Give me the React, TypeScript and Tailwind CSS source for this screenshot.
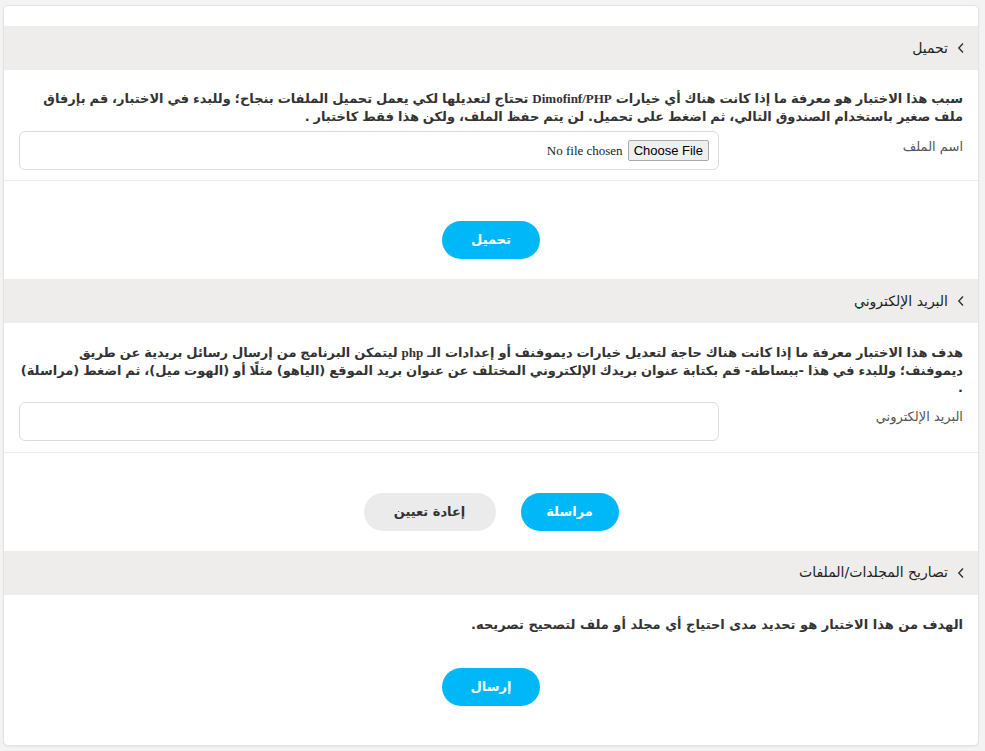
import React from "react";

const ar = { fontFamily: '"DejaVu Sans", "Liberation Sans", sans-serif' };
const serif = { fontFamily: '"Liberation Serif", serif' };

function Chevron() {
  return (
    <svg width="8" height="12" viewBox="0 0 8 12" className="shrink-0">
      <path d="M6 1.5 L1.8 6 L6 10.5" fill="none" stroke="#333" strokeWidth="1.4" />
    </svg>
  );
}

function Header({ title }: { title: string }) {
  return (
    <div className="h-[44px] bg-[#eeedeb] flex items-center pr-[13px] gap-[9px] text-[14px] text-[#222]">
      <Chevron />
      <span>{title}</span>
    </div>
  );
}

function PillButton({ label, gray }: { label: string; gray?: boolean }) {
  return (
    <button
      className={
        "h-[38px] rounded-full text-[13px] font-bold " +
        (gray ? "bg-[#ebebeb] text-[#333] w-[132px]" : "bg-[#00b8f8] text-white w-[98px]")
      }
      style={ar}
    >
      {label}
    </button>
  );
}

export default function App() {
  return (
    <div className="min-h-screen bg-[#f3f3f3] pt-[5px] pb-[5px]" style={ar}>
      <div
        dir="rtl"
        className="ml-[3px] w-[976px] bg-white border border-[#e3e3e3] rounded-[5px] shadow-[0_1px_2px_rgba(0,0,0,0.06)] pt-[20px] pb-[39px]"
      >
        {/* Section 1 */}
        <Header title="تحميل" />
        <div className="px-[15px] pt-[20px] pb-[10px]">
          <p className="text-[13px] font-bold leading-[17.5px] text-[#333] [word-spacing:-0.6px]">
            سبب هذا الاختبار هو معرفة ما إذا كانت هناك أي خيارات{" "}
            <span style={serif}>Dimofinf/PHP</span> تحتاج لتعديلها لكي يعمل تحميل الملفات بنجاح؛ وللبدء في
            الاختبار، قم بإرفاق ملف صغير باستخدام الصندوق التالي، ثم اضغط على تحميل. لن يتم حفظ الملف، ولكن هذا
            فقط كاختبار .
          </p>
          <div className="mt-[6px] flex">
            <label className="w-[244px] shrink-0 pt-[6px] text-[13px] text-[#555]">اسم الملف</label>
            <div className="flex-1 h-[39px] border border-[#dcdcdc] rounded-[6px] flex items-center pr-[9px] gap-[5px]">
              <span
                className="h-[21px] px-[5px] flex items-center border border-[#a9a9a9] rounded-[2px] bg-[#efefef] text-[13px] text-black"
                style={{ fontFamily: '"Liberation Sans", Arial, sans-serif' }}
              >
                Choose File
              </span>
              <span className="text-[13px] text-[#222]" style={serif}>
                No file chosen
              </span>
            </div>
          </div>
        </div>
        <div className="border-t border-[#ececec]" />
        <div className="pt-[40px] pb-[20px] flex justify-center">
          <PillButton label="تحميل" />
        </div>

        {/* Section 2 */}
        <Header title="البريد الإلكتروني" />
        <div className="px-[15px] pt-[21px] pb-[11px]">
          <p className="text-[13px] font-bold leading-[17.5px] text-[#333] [word-spacing:-0.6px]">
            هدف هذا الاختبار معرفة ما إذا كانت هناك حاجة لتعديل خيارات ديموفنف أو إعدادات الـ{" "}
            <span style={serif}>php</span> ليتمكن البرنامج من إرسال رسائل بريدية عن طريق ديموفنف؛ وللبدء في هذا
            -ببساطة- قم بكتابة عنوان بريدك الإلكتروني المختلف عن عنوان بريد الموقع (الياهو) مثلًا أو (الهوت ميل)،
            ثم اضغط (مراسلة) .
          </p>
          <div className="mt-[5px] flex">
            <label className="w-[244px] shrink-0 pt-[5px] text-[13px] text-[#555]">البريد الإلكتروني</label>
            <div className="flex-1 h-[39px] border border-[#dcdcdc] rounded-[6px]" />
          </div>
        </div>
        <div className="border-t border-[#ececec]" />
        <div className="pt-[40px] pb-[20px] flex justify-center gap-[25px]">
          <PillButton label="مراسلة" />
          <PillButton label="إعادة تعيين" gray />
        </div>

        {/* Section 3 */}
        <Header title="تصاريح المجلدات/الملفات" />
        <div className="px-[15px] pt-[21px]">
          <p className="text-[13px] font-bold leading-[17.5px] text-[#333]">
            الهدف من هذا الاختبار هو تحديد مدى احتياج أي مجلد أو ملف لتصحيح تصريحه.
          </p>
        </div>
        <div className="pt-[35px] flex justify-center">
          <PillButton label="إرسال" />
        </div>
      </div>
    </div>
  );
}
